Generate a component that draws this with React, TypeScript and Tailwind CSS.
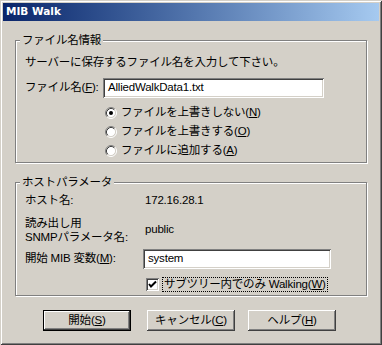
import React from 'react';

const raised = 'shadow-[inset_-1px_-1px_#404040,inset_1px_1px_#ffffff,inset_-2px_-2px_#808080,inset_2px_2px_#d4d0c8]';
const sunken = 'shadow-[inset_1px_1px_#808080,inset_-1px_-1px_#ffffff,inset_2px_2px_#404040,inset_-2px_-2px_#d4d0c8]';

const Radio: React.FC<{ checked?: boolean }> = ({ checked }) => (
    <svg width="12" height="12" viewBox="0 0 12 12" className="shrink-0">
        <circle cx="6" cy="6" r="4.5" fill="#fff" />
        <path d="M2.11 9.89 A5.5 5.5 0 0 1 9.89 2.11" stroke="#808080" fill="none" />
        <path d="M9.89 2.11 A5.5 5.5 0 0 1 2.11 9.89" stroke="#fff" fill="none" />
        <path d="M2.82 9.18 A4.5 4.5 0 0 1 9.18 2.82" stroke="#404040" fill="none" />
        <path d="M9.18 2.82 A4.5 4.5 0 0 1 2.82 9.18" stroke="#d4d0c8" fill="none" />
        {checked && <circle cx="6" cy="6" r="2" fill="#000" />}
    </svg>
);

const GroupBox: React.FC<{ title: string; className: string; children: React.ReactNode }> = ({ title, className, children }) => (
    <div className={`relative ml-[12px] w-[352px] border border-[#808080] shadow-[1px_1px_0_#ffffff,inset_1px_1px_0_#ffffff] ${className}`}>
        <span className="absolute -top-[8px] left-[4px] bg-[#d4d0c8] px-[2px] leading-[14px]">{title}</span>
        {children}
    </div>
);

const Button: React.FC<{ label: string; mn: string; isDefault?: boolean; className?: string }> = ({ label, mn, isDefault, className = '' }) => (
    <div className={`h-[21px] w-[88px] ${isDefault ? 'border border-black' : ''} ${className}`}>
        <div className={`flex h-full w-full items-center justify-center ${raised}`}>
            {label}(<u>{mn}</u>)
        </div>
    </div>
);

export default function App() {
    return (
        <div className="h-[345px] w-[382px] bg-[#d4d0c8] px-[3px] pt-[3px] text-[11.5px] tracking-[-0.2px] text-black font-['Liberation_Sans','Noto_Sans_CJK_JP',sans-serif] shadow-[inset_1px_1px_#d4d0c8,inset_-1px_-1px_#404040,inset_2px_2px_#ffffff,inset_-2px_-2px_#808080]">
            <div className="flex h-[18px] items-center bg-linear-to-r from-[#0a246a] to-[#a6caf0] pl-[3px] font-['DejaVu_Sans',sans-serif] text-[10.5px] font-bold tracking-normal text-white">
                MIB Walk
            </div>

            <GroupBox title="ファイル名情報" className="mt-[19px] h-[123px] pl-[9px]">
                <div className="mt-[14px] leading-[14px]">サーバーに保存するファイル名を入力して下さい。</div>
                <div className="mt-[9px] flex h-[20px] items-center">
                    <span className="w-[78px]">ファイル名(<u>F</u>):</span>
                    <div className={`flex h-[20px] w-[221px] items-center bg-white pl-[5px] ${sunken}`}>AlliedWalkData1.txt</div>
                </div>
                <div className="mt-[5px] ml-[80px] flex flex-col">
                    <div className="flex h-[19px] items-center gap-[4px]"><Radio checked /><span>ファイルを上書きしない(<u>N</u>)</span></div>
                    <div className="flex h-[19px] items-center gap-[4px]"><Radio /><span>ファイルを上書きする(<u>O</u>)</span></div>
                    <div className="flex h-[19px] items-center gap-[4px]"><Radio /><span>ファイルに追加する(<u>A</u>)</span></div>
                </div>
            </GroupBox>

            <GroupBox title="ホストパラメータ" className="mt-[19px] h-[114px] pl-[9px]">
                <div className="mt-[11px] flex h-[14px] items-center">
                    <span className="w-[120px]">ホスト名:</span>
                    <span>172.16.28.1</span>
                </div>
                <div className="mt-[8px] flex items-center">
                    <span className="w-[120px] leading-[14px]">読み出し用<br />SNMPパラメータ名:</span>
                    <span>public</span>
                </div>
                <div className="mt-[5px] flex h-[20px] items-center">
                    <span className="w-[118px]">開始 MIB 変数(<u>M</u>):</span>
                    <div className={`flex h-[20px] w-[188px] items-center bg-white pl-[5px] ${sunken}`}>system</div>
                </div>
                <div className="mt-[8px] ml-[121px] flex h-[15px] items-center gap-[3px]">
                    <div className={`relative h-[13px] w-[13px] bg-white ${sunken}`}>
                        <svg width="13" height="13" viewBox="0 0 13 13" className="absolute inset-0">
                            <path d="M3 6 L5 8.5 L10 3.5" stroke="#000" strokeWidth="2" fill="none" />
                        </svg>
                    </div>
                    <span className="flex h-[15px] items-center border border-dotted border-black px-[1px]">サブツリー内でのみ Walking(<u>W</u>)</span>
                </div>
            </GroupBox>

            <div className="mt-[14px] ml-[40px] flex">
                <Button label="開始" mn="S" isDefault />
                <Button label="キャンセル" mn="C" className="ml-[16px]" />
                <Button label="ヘルプ" mn="H" className="ml-[13px]" />
            </div>
        </div>
    );
}
